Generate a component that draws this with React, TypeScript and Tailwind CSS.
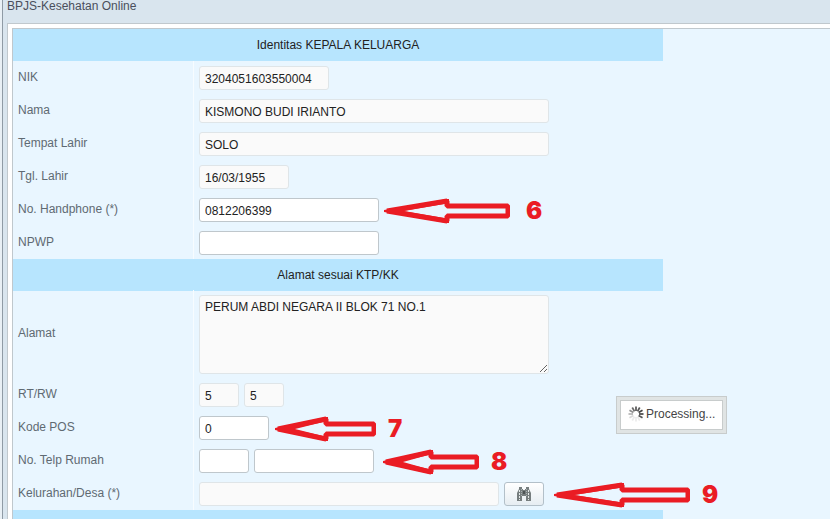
import type { ReactNode } from 'react';

function SectionHeading({ children }: { children?: ReactNode }) {
  return <h2 className="flex h-8 w-full max-w-[650px] items-center justify-center bg-[#b7e5fe] text-[#222]">{children}</h2>;
}

function Row({ label, htmlFor, children }: { label: string; htmlFor: string; children: ReactNode }) {
  return (
    <div className="flex">
      <label htmlFor={htmlFor} className="flex w-[180px] shrink-0 items-center pb-0.5 pl-[5px] text-[#5f6a72]">
        {label}
      </label>
      <div className="flex min-h-[33px] items-start border-l border-[#f7fcff] pt-[5px] pb-1 pl-[5px]">
        <div className="relative flex items-center gap-[5px]">{children}</div>
      </div>
    </div>
  );
}

function Field({ id, label, value = '', width, locked }: { id: string; label?: string; value?: string; width: string; locked?: boolean }) {
  const look = locked ? 'border-[#dfe5e8] bg-[#fafafa]' : 'border-[#bfc7cc] bg-white';
  return (
    <input
      id={id}
      aria-label={label}
      defaultValue={value}
      readOnly={locked}
      className={`h-6 rounded-[3px] border px-[5px] pt-px text-[#222] outline-none ${look} ${width}`}
    />
  );
}

function Arrow({ length, head }: { length: number; head: number }) {
  const end = length - 2;
  const neck = head - 2;
  return (
    <svg width={length} height="26" viewBox={`0 0 ${length} 26`} fill="none" stroke="#ea1c24" className="shrink-0">
      <path d={`M3 13L${neck} 3V8H${end}V18H${neck}V23Z`} strokeWidth="5" strokeLinejoin="bevel" />
      <path d={`M0 12V14L${neck} 25H${head}V20H${neck - 3}L20 13L${neck - 3} 6H${head}V1H${neck}Z`} fill="#ea1c24" stroke="none" />
    </svg>
  );
}

function Callout({ step, length, head, place }: { step: number; length: number; head: number; place: string }) {
  return (
    <div className={`absolute top-0 left-full flex h-[26px] items-center ${place}`}>
      <Arrow length={length} head={head} />
      <span className="font-['Inter',sans-serif] text-2xl leading-6 font-black text-[#ea1c24]">{step}</span>
    </div>
  );
}

function Binoculars() {
  return (
    <svg width="16" height="16" viewBox="0 0 16 16">
      <path d="M3 1h3v2h1v1h2V3h1V1h3v2l2 4v8h-5v-5H6v5H1V7l2-4Z" fill="#767d7e" />
      <path d="M3.500 4v10M12.500 4v10" stroke="#e3e8e8" strokeDasharray="2 1" />
      <path d="M5.500 3v7M10.500 3v7" stroke="#a9b1b2" strokeDasharray="1 1" />
      <path d="M7 5h2v3H7Z" fill="#4d5455" />
    </svg>
  );
}

function Spinner() {
  return (
    <svg width="16" height="16" viewBox="0 0 16 16" stroke="#444" strokeWidth="1.700">
      {Array.from({ length: 12 }, (_, i) => (
        <path key={i} d="M8 .5V5" opacity={[0.9, 0.9, 1, 1, 0.9, 0.1, 0.1, 0.1, 0.2, 0.4, 0.6, 0.8][i]} transform={`rotate(${i * 30} 8 8)`} />
      ))}
    </svg>
  );
}

export default function App() {
  return (
    <div className="h-screen overflow-hidden bg-[#e9f0f5] pl-[2px] font-['Liberation_Sans',Arial,sans-serif] text-xs">
      <div className="flex h-full flex-col border-l border-[#8f9ba5] bg-[#d9e5ee]">
        <h1 className="h-[23px] shrink-0 pl-1 leading-3 text-[#4a4f5c]">BPJS-Kesehatan Online</h1>
        <div className="ml-1 flex-1 border-t border-l border-[#c0c8cd] bg-white pt-1 pl-1">
          <form className="min-h-full border-t border-l border-[#c0c8cd] bg-[#e9f6ff]">
            <SectionHeading>Identitas KEPALA KELUARGA</SectionHeading>
            <Row label="NIK" htmlFor="nik">
              <Field id="nik" value="3204051603550004" width="w-[130px]" locked />
            </Row>
            <Row label="Nama" htmlFor="nama">
              <Field id="nama" value="KISMONO BUDI IRIANTO" width="w-[350px]" locked />
            </Row>
            <Row label="Tempat Lahir" htmlFor="tempat">
              <Field id="tempat" value="SOLO" width="w-[350px]" locked />
            </Row>
            <Row label="Tgl. Lahir" htmlFor="tgl">
              <Field id="tgl" value="16/03/1955" width="w-[90px]" locked />
            </Row>
            <Row label="No. Handphone (*)" htmlFor="hp">
              <Field id="hp" value="0812206399" width="w-[180px]" />
              <Callout step={6} length={126} head={65} place="ml-[5px] gap-4" />
            </Row>
            <Row label="NPWP" htmlFor="npwp">
              <Field id="npwp" width="w-[180px]" />
            </Row>

            <SectionHeading>Alamat sesuai KTP/KK</SectionHeading>
            <div className="-mt-px">
              <Row label="Alamat" htmlFor="alamat">
                <textarea
                  id="alamat"
                  readOnly
                  defaultValue="PERUM ABDI NEGARA II BLOK 71 NO.1"
                  className="h-[79px] w-[350px] rounded-[3px] border border-[#dfe5e8] bg-[#fafafa] px-[5px] py-[3px] text-[#222] outline-none"
                />
              </Row>
            </div>
            <Row label="RT/RW" htmlFor="rt">
              <Field id="rt" value="5" width="w-10" locked />
              <Field id="rw" label="RW" value="5" width="w-10" locked />
            </Row>
            <Row label="Kode POS" htmlFor="pos">
              <Field id="pos" value="0" width="w-[70px]" />
              <Callout step={7} length={101} head={53} place="ml-1.5 gap-3" />
            </Row>
            <Row label="No. Telp Rumah" htmlFor="telp">
              <Field id="telp" width="w-[50px]" />
              <Field id="telp2" label="Nomor telepon" width="w-[120px]" />
              <Callout step={8} length={96} head={50} place="ml-[9px] gap-3" />
            </Row>
            <Row label="Kelurahan/Desa (*)" htmlFor="desa">
              <Field id="desa" width="w-[300px]" locked />
              <button
                type="button"
                aria-label="Cari"
                className="flex h-6 w-10 items-center justify-center rounded-[3px] border border-[#b3c0c9] bg-linear-to-b from-white to-[#e6edf2]"
              >
                <Binoculars />
              </button>
              <Callout step={9} length={136} head={70} place="ml-2.5 gap-3" />
            </Row>
            <SectionHeading />
          </form>
        </div>
      </div>

      <div role="status" className="absolute top-[396px] left-[616px] border border-[#c8cccc] bg-[#e0e4e4] p-[3px]">
        <div className="flex h-[30px] items-center gap-0.5 border border-[#c8cccc] bg-white px-[7px] pb-0.5 text-[#444]">
          <Spinner />
          Processing...
        </div>
      </div>
    </div>
  );
}
